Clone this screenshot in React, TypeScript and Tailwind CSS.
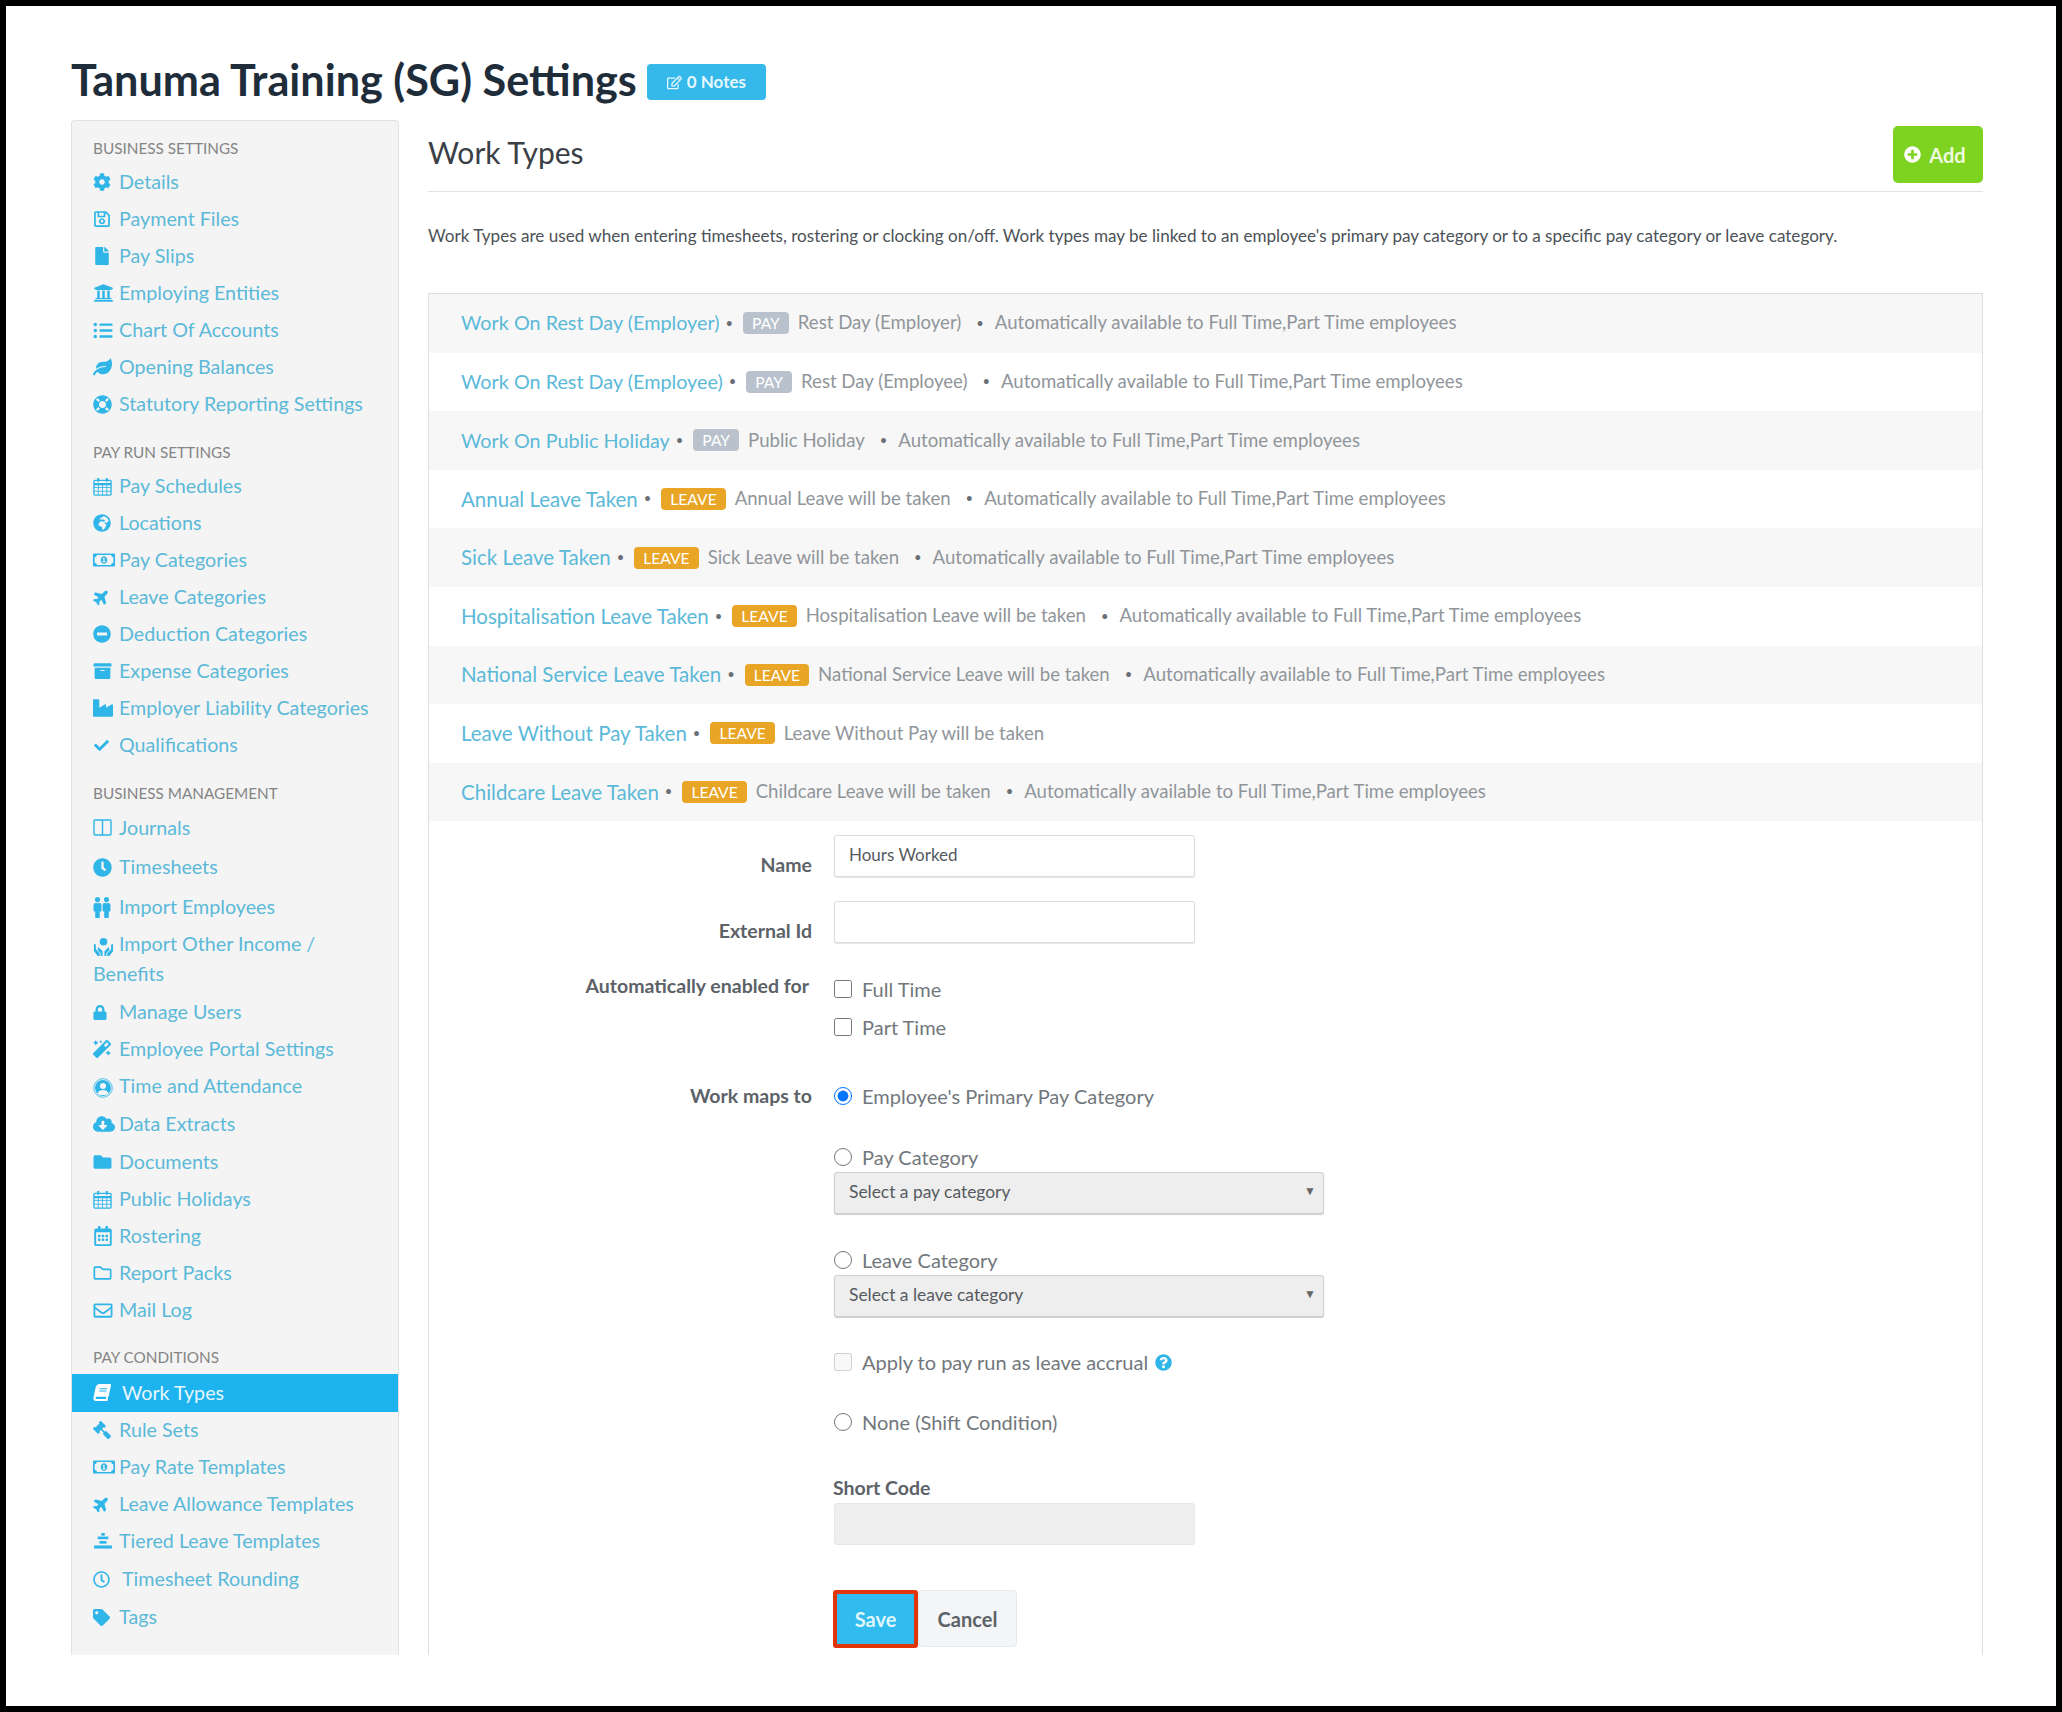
import type { ReactNode } from "react";
import {
  FaArchive,
  FaBook,
  FaCheck,
  FaClock,
  FaCloudDownloadAlt,
  FaCog,
  FaFile,
  FaFolder,
  FaGavel,
  FaGlobeAfrica,
  FaIndustry,
  FaLeaf,
  FaLifeRing,
  FaListUl,
  FaLock,
  FaMagic,
  FaMale,
  FaMinusCircle,
  FaPlane,
  FaPlusCircle,
  FaQuestionCircle,
  FaRegCalendarAlt,
  FaRegClock,
  FaRegEdit,
  FaRegEnvelope,
  FaRegFolder,
  FaRegMoneyBillAlt,
  FaRegSave,
  FaTag,
  FaUniversity
} from "react-icons/fa";

type NavItem = {
  label: string;
  icon: ReactNode;
  rowClass?: string;
  wrap?: boolean;
  active?: boolean;
  textClass?: string;
};

type NavGroup = {
  title: string;
  groupClass: string;
  headClass: string;
  items: NavItem[];
};

type WorkType = {
  name: string;
  kind: "PAY" | "LEAVE";
  detail: string;
  auto: boolean;
};

function CalendarGrid(): React.ReactElement {
  return (
    <svg viewBox="0 0 20 20" className="h-[19px] w-[19px]" fill="none" stroke="currentColor">
      <rect x="1" y="3.5" width="18" height="15.5" rx="1" strokeWidth="1.4" />
      <path d="M1 7.5h18" strokeWidth="2.4" />
      <path d="M5.5 1v4M14.5 1v4" strokeWidth="2.2" />
      <path d="M1 11h18M1 15h18M5.5 8v11M10 8v11M14.5 8v11" strokeWidth="0.9" />
    </svg>
  );
}

function ColumnsIcon(): React.ReactElement {
  return (
    <svg viewBox="0 0 20 18" className="h-[17px] w-[19px]" fill="none" stroke="currentColor" strokeWidth="1.5">
      <rect x="1" y="1" width="18" height="16" rx="1" />
      <path d="M10 1v16" />
    </svg>
  );
}

function TwoPeople(): React.ReactElement {
  return (
    <span className="flex">
      <FaMale className="-mx-[2px] h-[21px] w-[13px]" />
      <FaMale className="-mx-[2px] h-[21px] w-[13px]" />
    </span>
  );
}

function HandsUser(): React.ReactElement {
  return (
    <svg viewBox="0 0 22 22" className="h-[21px] w-[21px]" fill="currentColor">
      <circle cx="11" cy="6" r="4" />
      <path d="M1 8c1.500 0 2 1 2 2v4l4 4v3H5L1 16V8zM21 8c-1.500 0-2 1-2 2v4l-4 4v3h2l4-5V8z" />
      <path d="M6 12l4 4v5H8v-3l-3-3v-3h1zM16 12l-4 4v5h2v-3l3-3v-3h-1z" />
    </svg>
  );
}

function UserRing(): React.ReactElement {
  return (
    <svg viewBox="0 0 20 20" className="mt-[3px] h-[20px] w-[20px]">
      <circle cx="10" cy="10" r="9.300" fill="none" stroke="currentColor" strokeWidth="0.8" />
      <circle cx="10" cy="10" r="8" fill="currentColor" />
      <circle cx="10" cy="8" r="3" fill="#f4f4f4" />
      <path d="M4.500 15.500c1-3 3-3.500 5.500-3.500s4.500 .5 5.500 3.500C14 17.500 6 17.500 4.500 15.500z" fill="#f4f4f4" />
    </svg>
  );
}

function TierIcon(): React.ReactElement {
  return (
    <svg viewBox="0 0 20 18" className="h-[16px] w-[20px]" fill="currentColor">
      <rect x="8" y="0" width="4" height="3" />
      <rect x="4" y="4" width="12" height="3" />
      <rect x="6" y="9" width="8" height="3" />
      <rect x="0" y="14" width="20" height="3.500" />
    </svg>
  );
}

const iconSm = "h-[18px] w-[18px]";

const navGroups: NavGroup[] = [
  {
    title: "Business Settings",
    groupClass: "mt-[17px]",
    headClass: "mb-[5.5px]",
    items: [
      { label: "Details", icon: <FaCog className={iconSm} /> },
      { label: "Payment Files", icon: <FaRegSave className={iconSm} /> },
      { label: "Pay Slips", icon: <FaFile className={iconSm} /> },
      { label: "Employing Entities", icon: <FaUniversity className="h-[20px] w-[21px]" /> },
      { label: "Chart Of Accounts", icon: <FaListUl className="h-[19px] w-[20px]" /> },
      { label: "Opening Balances", icon: <FaLeaf className="h-[18px] w-[19px]" /> },
      { label: "Statutory Reporting Settings", icon: <FaLifeRing className="h-[19px] w-[19px]" /> }
    ]
  },
  {
    title: "Pay Run Settings",
    groupClass: "mt-[19.5px]",
    headClass: "mb-[5.5px]",
    items: [
      { label: "Pay Schedules", icon: <CalendarGrid /> },
      { label: "Locations", icon: <FaGlobeAfrica className={iconSm} /> },
      { label: "Pay Categories", icon: <FaRegMoneyBillAlt className="h-[20px] w-[22px]" /> },
      { label: "Leave Categories", icon: <FaPlane className="h-[16px] w-[17px] -rotate-45" /> },
      { label: "Deduction Categories", icon: <FaMinusCircle className={iconSm} /> },
      { label: "Expense Categories", icon: <FaArchive className="h-[18px] w-[19px]" /> },
      { label: "Employer Liability Categories", icon: <FaIndustry className="h-[20px] w-[20px]" /> },
      { label: "Qualifications", icon: <FaCheck className="h-[15px] w-[17px]" /> }
    ]
  },
  {
    title: "Business Management",
    groupClass: "mt-[19.5px]",
    headClass: "mb-[5.5px]",
    items: [
      { label: "Journals", icon: <ColumnsIcon />, rowClass: "h-[38.5px]" },
      { label: "Timesheets", icon: <FaClock className="h-[19px] w-[19px]" />, rowClass: "h-[40px]" },
      { label: "Import Employees", icon: <TwoPeople />, rowClass: "h-[40px]" },
      { label: "Import Other Income / Benefits", icon: <HandsUser />, wrap: true },
      { label: "Manage Users", icon: <FaLock className="h-[15px] w-[14px]" /> },
      { label: "Employee Portal Settings", icon: <FaMagic className="h-[18px] w-[18px]" /> },
      { label: "Time and Attendance", icon: <UserRing /> },
      { label: "Data Extracts", icon: <FaCloudDownloadAlt className="h-[20px] w-[22px]" />, rowClass: "h-[39px]" },
      { label: "Documents", icon: <FaFolder className="h-[18px] w-[19px]" /> },
      { label: "Public Holidays", icon: <CalendarGrid /> },
      { label: "Rostering", icon: <FaRegCalendarAlt className="h-[20px] w-[20px]" /> },
      { label: "Report Packs", icon: <FaRegFolder className="h-[18px] w-[19px]" /> },
      { label: "Mail Log", icon: <FaRegEnvelope className="h-[19px] w-[20px]" /> }
    ]
  },
  {
    title: "Pay Conditions",
    groupClass: "mt-[18.5px]",
    headClass: "mb-[7px]",
    items: [
      { label: "Work Types", icon: <FaBook className="h-[17px] w-[18px] -skew-x-12" />, active: true, rowClass: "h-[37.5px]", textClass: "ml-[3px]" },
      { label: "Rule Sets", icon: <FaGavel className={`${iconSm} -scale-x-100`} /> },
      { label: "Pay Rate Templates", icon: <FaRegMoneyBillAlt className="h-[20px] w-[22px]" /> },
      { label: "Leave Allowance Templates", icon: <FaPlane className="h-[16px] w-[17px] -rotate-45" /> },
      { label: "Tiered Leave Templates", icon: <TierIcon /> },
      { label: "Timesheet Rounding", icon: <FaRegClock className="h-[17px] w-[17px]" />, rowClass: "h-[39px]", textClass: "ml-[3px]" },
      { label: "Tags", icon: <FaTag className="h-[17px] w-[17px]" /> }
    ]
  }
];

const workTypes: WorkType[] = [
  { name: "Work On Rest Day (Employer)", kind: "PAY", detail: "Rest Day (Employer)", auto: true },
  { name: "Work On Rest Day (Employee)", kind: "PAY", detail: "Rest Day (Employee)", auto: true },
  { name: "Work On Public Holiday", kind: "PAY", detail: "Public Holiday", auto: true },
  { name: "Annual Leave Taken", kind: "LEAVE", detail: "Annual Leave will be taken", auto: true },
  { name: "Sick Leave Taken", kind: "LEAVE", detail: "Sick Leave will be taken", auto: true },
  { name: "Hospitalisation Leave Taken", kind: "LEAVE", detail: "Hospitalisation Leave will be taken", auto: true },
  { name: "National Service Leave Taken", kind: "LEAVE", detail: "National Service Leave will be taken", auto: true },
  { name: "Leave Without Pay Taken", kind: "LEAVE", detail: "Leave Without Pay will be taken", auto: false },
  { name: "Childcare Leave Taken", kind: "LEAVE", detail: "Childcare Leave will be taken", auto: true }
];

function SidebarItem({ item }: { item: NavItem }): React.ReactElement {
  if (item.wrap) {
    return (
      <a className="block h-[66.5px] pl-[21px] pr-[10px] pt-[2px] text-[19.7px] leading-[30px] text-[#5bb9d8]">
        <span className="inline-block w-[26px] align-middle text-[#2fb5e8]">{item.icon}</span>
        {item.label}
      </a>
    );
  }

  return (
    <a
      className={`flex items-center pl-[21px] text-[19.7px] ${item.rowClass ?? "h-[37px]"} ${
        item.active ? "bg-[#1db3ee] text-[#e6f7fd]" : "text-[#5bb9d8]"
      }`}
    >
      <span className={`flex w-[26px] shrink-0 items-center ${item.active ? "text-white" : "text-[#2fb5e8]"}`}>
        {item.icon}
      </span>
      <span className={item.textClass}>{item.label}</span>
    </a>
  );
}

function Sidebar(): React.ReactElement {
  return (
    <aside className="h-full w-[328px] shrink-0 overflow-hidden rounded-t-[4px] border-x border-t border-[#e2e2e2] bg-[#f4f4f4]">
      {navGroups.map((group) => (
        <div key={group.title} className={group.groupClass}>
          <h3 className={`flex h-[20px] items-center pl-[21px] text-[15.3px] font-normal uppercase text-[#858585] ${group.headClass}`}>
            {group.title}
          </h3>
          {group.items.map((item) => (
            <SidebarItem key={item.label} item={item} />
          ))}
        </div>
      ))}
    </aside>
  );
}

function WorkTypeRow({ row, shaded }: { row: WorkType; shaded: boolean }): React.ReactElement {
  return (
    <li className={`flex h-[58.6px] items-center pl-[32px] text-[18.6px] text-[#90959a] ${shaded ? "bg-[#f7f7f7]" : "bg-white"}`}>
      <a className={`text-[#5bb9d8] ${row.kind === "PAY" ? "text-[19.8px]" : "text-[20.5px]"}`}>{row.name}</a>
      <span className="ml-[6px] text-[13px] text-[#6a7075]">•</span>
      <span
        className={`ml-[10px] mr-[9px] rounded-[4px] px-[9px] pb-[1px] pt-[2px] text-[15.6px] leading-[19px] text-white ${
          row.kind === "PAY" ? "bg-[#b9c2cc]" : "bg-[#e8a526]"
        }`}
      >
        {row.kind}
      </span>
      <span>{row.detail}</span>
      {row.auto ? (
        <>
          <span className="ml-[15px] mr-[11px] text-[13px] text-[#6a7075]">•</span>
          <span>Automatically available to Full Time,Part Time employees</span>
        </>
      ) : null}
    </li>
  );
}

function FieldLabel({ children, className }: { children: ReactNode; className?: string }): React.ReactElement {
  return <label className={`w-[383px] shrink-0 text-right text-[19.5px] font-bold leading-[24px] text-[#5c6268] ${className ?? ""}`}>{children}</label>;
}

function WorkTypeForm(): React.ReactElement {
  const inputClass = "h-[42px] w-[361px] rounded-[3px] border border-[#dcdcdc] bg-white px-[14px] text-[17px] text-[#555a5f] shadow-[0_1px_1px_#e5e5e5] outline-none";
  const selectClass = "h-[42px] w-[490px] appearance-none rounded-[3px] border border-[#cfcfcf] bg-[#eeeeee] px-[14px] pb-[2px] text-[17.4px] text-[#555a5f] shadow-[0_1px_1px_#cccccc] outline-none";
  const optionText = "text-[20px] text-[#72777c]";

  return (
    <form className="text-[18px]">
      <div className="mt-[14px] flex h-[42px] items-start">
        <FieldLabel className="pt-[18px]">Name</FieldLabel>
        <input className={`ml-[22px] ${inputClass} pb-[3px]`} defaultValue="Hours Worked" />
      </div>
      <div className="mt-[24px] flex h-[42px] items-start">
        <FieldLabel className="pt-[18px]">External Id</FieldLabel>
        <input className={`ml-[22px] ${inputClass}`} />
      </div>

      <div className="mt-[26px] flex">
        <FieldLabel className="mt-[5px] pr-[3px]">Automatically enabled for</FieldLabel>
        <div className="ml-[22px]">
          <label className="flex h-[38.5px] items-center gap-[10px]">
            <input type="checkbox" className="m-0 h-[18px] w-[18px]" />
            <span className={optionText}>Full Time</span>
          </label>
          <label className="flex h-[38.5px] items-center gap-[10px]">
            <input type="checkbox" className="m-0 h-[18px] w-[18px]" />
            <span className={optionText}>Part Time</span>
          </label>
        </div>
      </div>

      <div className="mt-[31px] flex h-[38px] items-center">
        <FieldLabel>Work maps to</FieldLabel>
        <label className="ml-[22px] flex items-center gap-[10px]">
          <input type="radio" name="maps" defaultChecked className="m-0 h-[18px] w-[18px]" />
          <span className={optionText}>Employee's Primary Pay Category</span>
        </label>
      </div>

      <div className="ml-[405px]">
        <label className="mt-[26px] flex h-[31px] items-center gap-[10px]">
          <input type="radio" name="maps" className="m-0 h-[18px] w-[18px]" />
          <span className={optionText}>Pay Category</span>
        </label>
        <div className="relative h-[42px] w-[490px]">
          <select className={selectClass}>
            <option>Select a pay category</option>
          </select>
          <span className="absolute right-[8px] top-[10px] text-[12px] text-[#666666]">▼</span>
        </div>

        <label className="mt-[30px] flex h-[31px] items-center gap-[10px]">
          <input type="radio" name="maps" className="m-0 h-[18px] w-[18px]" />
          <span className={optionText}>Leave Category</span>
        </label>
        <div className="relative h-[42px] w-[490px]">
          <select className={selectClass}>
            <option>Select a leave category</option>
          </select>
          <span className="absolute right-[8px] top-[10px] text-[12px] text-[#666666]">▼</span>
        </div>

        <label className="mt-[30px] flex h-[30px] items-center gap-[10px]">
          <input type="checkbox" disabled className="m-0 h-[18px] w-[18px]" />
          <span className={optionText}>Apply to pay run as leave accrual</span>
          <FaQuestionCircle className="-ml-[3px] h-[17px] w-[17px] text-[#2fb5e8]" />
        </label>

        <label className="mt-[30px] flex h-[30px] items-center gap-[10px]">
          <input type="radio" name="maps" className="m-0 h-[18px] w-[18px]" />
          <span className={optionText}>None (Shift Condition)</span>
        </label>

        <label className="-ml-[1px] mt-[39px] block h-[24px] text-[19.5px] font-bold leading-[24px] text-[#5c6268]">Short Code</label>
        <input disabled className="mt-[3px] block h-[42px] w-[361px] rounded-[3px] border border-[#e6e6e6] bg-[#eeeeee]" />

        <div className="-ml-[1px] mt-[45px] flex items-start">
          <button type="button" className="h-[58px] w-[85px] rounded-[3px] border-[4px] border-[#e0360a] bg-[#31bbee] text-[20px] font-bold text-[#dff6fd]">
            Save
          </button>
          <button type="button" className="h-[57px] w-[99px] rounded-[4px] border border-[#e6e9ec] bg-[#f3f5f7] text-[20px] font-bold text-[#5c6268]">
            Cancel
          </button>
        </div>
      </div>
    </form>
  );
}

export default function App(): React.ReactElement {
  return (
    <div className="h-[1712px] w-[2062px] overflow-hidden bg-black p-[6px] font-['Lato','Liberation_Sans',sans-serif]">
      <div className="h-[1700px] bg-white pl-[65px] pr-[73px] pt-[47px]">
        <header className="flex h-[67px] items-start">
          <h1 className="-mt-[1px] text-[43.2px] font-bold leading-[54px] text-[#1f2d3a]">Tanuma Training (SG) Settings</h1>
          <button type="button" className="ml-[10px] mt-[11px] flex h-[36px] w-[119px] items-center justify-center gap-[5px] rounded-[4px] bg-[#35b8ea] text-[17px] font-bold text-[#e6f7fd]">
            <FaRegEdit className="h-[15px] w-[15px]" />0 Notes
          </button>
        </header>

        <div className="flex h-[1535px] overflow-hidden">
          <Sidebar />
          <main className="ml-[29px] min-w-0 flex-1">
            <div className="flex h-[72px] items-start justify-between border-b border-[#e3e3e3]">
              <h2 className="mt-[13px] text-[30px] font-normal leading-[38px] text-[#3a4046]">Work Types</h2>
              <button type="button" className="mt-[6px] flex h-[57px] w-[90px] items-center justify-center gap-[8px] rounded-[5px] bg-[#7ed321] pr-[6px] text-[20px] font-bold text-[#eefadd]">
                <FaPlusCircle className="h-[17px] w-[17px] text-white" />Add
              </button>
            </div>
            <p className="mt-[32px] h-[24px] whitespace-nowrap text-[17.1px] leading-[24px] text-[#4c5257]">
              Work Types are used when entering timesheets, rostering or clocking on/off. Work types may be linked to an employee's primary pay category or to a specific pay category or leave category.
            </p>
            <section className="mt-[45px] h-[1370px] border-x border-t border-[#dedede]">
              <ul>
                {workTypes.map((row, index) => (
                  <WorkTypeRow key={row.name} row={row} shaded={index % 2 === 0} />
                ))}
              </ul>
              <WorkTypeForm />
            </section>
          </main>
        </div>
      </div>
    </div>
  );
}
